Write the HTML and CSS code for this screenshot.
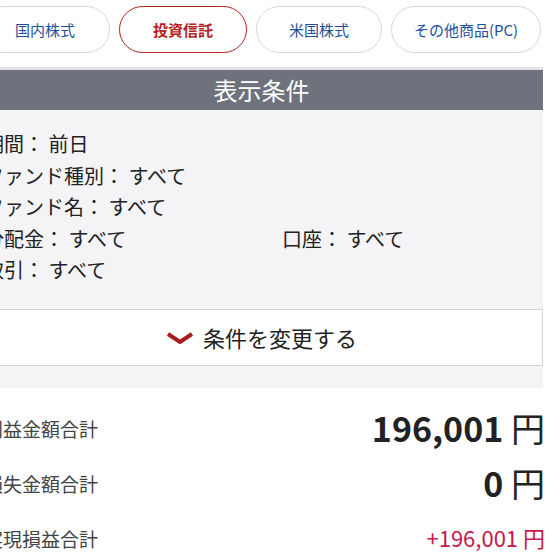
FILE: index.html
```html
<!DOCTYPE html>
<html lang="ja">
<head>
    <meta charset="UTF-8">
    <meta name="viewport" content="width=device-width, initial-scale=1.0">
    <title>投資信託 損益</title>
    <link rel="stylesheet" href="styles.css">
</head>
<body>
    <div class="page">
        <!-- タブ -->
        <nav class="tabs">
            <a class="tab">国内株式</a>
            <a class="tab active">投資信託</a>
            <a class="tab">米国株式</a>
            <a class="tab">その他商品(PC)</a>
        </nav>

        <h2 class="section-title">表示条件</h2>

        <section class="conditions">
            <ul class="cond-list">
                <li class="full">期間：&nbsp;前日</li>
                <li class="full">ファンド種別：&nbsp;すべて</li>
                <li class="full">ファンド名：&nbsp;すべて</li>
                <li>分配金：&nbsp;すべて</li>
                <li>口座：&nbsp;すべて</li>
                <li class="full">取引：&nbsp;すべて</li>
            </ul>
            <button class="change-btn">
                <svg class="chevron" width="28" height="12" viewBox="0 0 28 12">
                    <polyline points="2,2 14,10 26,2" fill="none" stroke="#a81d1f" stroke-width="4"/>
                </svg>
                条件を変更する
            </button>
        </section>

        <!-- 合計 -->
        <section class="totals">
            <div class="total-row">
                <span class="label">利益金額合計</span>
                <span class="amount big">196,001 <span class="yen">円</span></span>
            </div>
            <div class="total-row">
                <span class="label">損失金額合計</span>
                <span class="amount big">0 <span class="yen">円</span></span>
            </div>
            <div class="total-row">
                <span class="label">実現損益合計</span>
                <span class="amount plus">+196,001 円</span>
            </div>
        </section>
    </div>
</body>
</html>
```

FILE: styles.css
```css
* {
    margin: 0;
    padding: 0;
    box-sizing: border-box;
}

body {
    font-family: "Noto Sans CJK JP", "Noto Sans", sans-serif;
    background-color: #ffffff;
    color: #222222;
    overflow: hidden;
}

.page {
    width: 563px;
    margin-left: -20px;
}

/* タブ */
.tabs {
    display: grid;
    grid-template-columns: 130px 128px 126px 150px;
    gap: 9px;
    height: 67px;
    padding-top: 6px;
    background-color: #ffffff;
}

.tab {
    display: flex;
    align-items: center;
    justify-content: center;
    height: 47px;
    border: 1px solid #d8d8d8;
    border-radius: 24px;
    font-size: 15px;
    color: #1d4f9b;
    white-space: nowrap;
}

.tab.active {
    border: 1.5px solid #b4231f;
    color: #b4231f;
    font-weight: bold;
}

.section-title {
    height: 43px;
    border-top: 3px solid #e2e2e5;
    background-color: #6e727c;
    color: #ffffff;
    font-size: 24px;
    font-weight: normal;
    line-height: 40px;
    text-align: center;
}

/* 表示条件 */
.conditions {
    background-color: #f4f4f7;
    padding: 18px 0 22px;
}

.cond-list {
    list-style: none;
    display: grid;
    grid-template-columns: 298px 1fr;
    padding-left: 4px;
    font-size: 20px;
    line-height: 31.5px;
}

.cond-list .full {
    grid-column: 1 / -1;
}

.change-btn {
    display: flex;
    align-items: center;
    justify-content: center;
    gap: 9px;
    width: 100%;
    height: 57px;
    margin-top: 23px;
    border: 1px solid #d2d2d6;
    background-color: #ffffff;
    font-family: inherit;
    font-size: 22px;
    color: #222222;
}

.chevron {
    margin-top: 2px;
}

/* 合計 */
.totals {
    padding-top: 12px;
}

.total-row {
    display: flex;
    align-items: center;
    justify-content: space-between;
    height: 55px;
    padding-left: 4px;
}

.label {
    font-size: 19px;
    color: #444444;
    margin-top: 3px;
}

.amount {
    margin-right: -2px;
}

.amount.big {
    font-size: 34px;
    font-weight: bold;
    color: #222222;
}

.amount .yen {
    font-weight: normal;
}

.amount.plus {
    font-size: 22px;
    color: #c8174a;
}
```
